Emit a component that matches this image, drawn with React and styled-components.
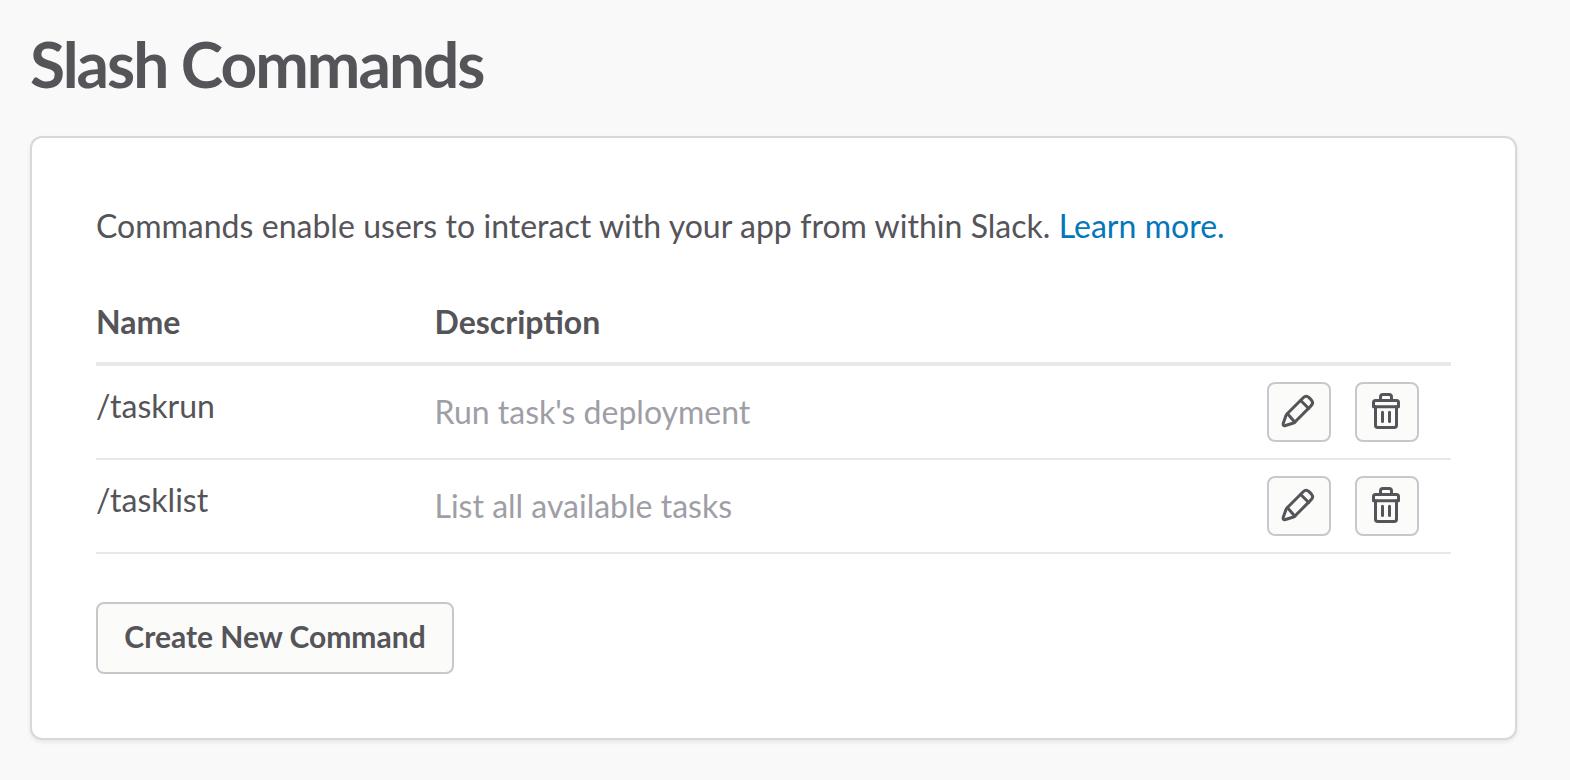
import React from "react";
import styled, { createGlobalStyle } from "styled-components";

const Global = createGlobalStyle`
  * { box-sizing: border-box; }
  body {
    margin: 0;
    background: #f9f9f9;
    color: #555459;
    font-family: Lato, "Liberation Sans", sans-serif;
    font-size: 32px;
    overflow: hidden;
  }
`;

const Page = styled.main`
  width: 1570px;
  height: 780px;
  padding: 30px 53px 0 30px;
  background: #f9f9f9;
`;

const Title = styled.h1`
  margin: 0 0 26px;
  height: 80px;
  line-height: 68px;
  font-size: 64px;
  font-weight: 700;
  letter-spacing: -2px;
`;

const Card = styled.section`
  height: 604px;
  padding: 64px;
  background: #fff;
  border: 2px solid #d8d8d8;
  border-radius: 12px;
  box-shadow: 0 2px 4px rgba(0, 0, 0, 0.08);
`;

const Intro = styled.p`
  margin: 0;
  height: 48px;
  line-height: 48px;
  white-space: nowrap;
  word-spacing: 0.2px;
`;

const Link = styled.a`
  color: #0576b9;
  text-decoration: none;
`;

const Table = styled.div`
  margin-top: 48px;
`;

const Row = styled.div`
  display: grid;
  grid-template-columns: 338.5px 1fr auto;
  height: 94px;
  padding-right: 32px;
  border-bottom: 2px solid #e8e8e8;
`;

const HeadRow = styled(Row)`
  height: 68px;
  border-bottom-width: 4px;
  font-weight: 700;
  line-height: 48px;
`;

const Name = styled.div`
  padding-top: 16px;
  line-height: 48px;
`;

const Description = styled.div`
  padding-top: 22px;
  line-height: 48px;
  color: #9e9ea6;
`;

const Actions = styled.div`
  display: flex;
  gap: 24px;
  padding-top: 16px;
`;

const Button = styled.button`
  display: flex;
  align-items: center;
  justify-content: center;
  padding: 0;
  background: #fbfbf9;
  border: 2px solid #c5c9cc;
  border-radius: 8px;
  color: #555459;
  font-family: inherit;
`;

const IconButton = styled(Button)`
  width: 64px;
  height: 60px;
`;

const CreateButton = styled(Button)`
  width: 358px;
  height: 72px;
  margin-top: 48px;
  padding-bottom: 5px;
  font-size: 30px;
  font-weight: 700;
`;

const Icon = styled.svg`
  display: block;
  width: 40px;
  height: 40px;
  fill: none;
  stroke: currentColor;
  stroke-width: 3;
  stroke-linejoin: round;
  stroke-linecap: round;
`;

const Pencil = () => (
  <Icon viewBox="0 0 40 40">
    <path d="M8.200 21.700L24.200 5.700Q27 2.900 29.800 5.400L32.300 7.900Q35 10.800 32.200 13.600L16.200 29.800Q15.500 30.600 14.500 31L6.500 33.500Q3.700 34.300 4.200 31.500L7 23.500Q7.400 22.500 8.200 21.700Z" />
    <path d="M21.700 8.500L29.700 16.500M8.500 21.700L15.900 30.200" />
  </Icon>
);

const Trash = () => (
  <Icon viewBox="0 0 40 40">
    <path d="M6.500 14.700V10.500Q6.500 8.500 8.500 8.500H29.500Q31.500 8.500 31.500 10.500V14.700Z" />
    <path d="M13.500 8.500V5Q13.500 2.500 16 2.500H22Q24.500 2.500 24.500 5V8.500" />
    <path d="M8.500 14.700V33.200Q8.500 35.500 10.800 35.500H27.200Q29.500 35.500 29.500 33.200V14.700M15.500 20.300V29.500M22.500 20.300V29.500" />
  </Icon>
);

const commands = [
  { name: "/taskrun", description: "Run task's deployment" },
  { name: "/tasklist", description: "List all available tasks" },
];

export default function App() {
  return (
    <Page>
      <Global />
      <Title>Slash Commands</Title>
      <Card>
        <Intro>
          Commands enable users to interact with your app from within Slack.{" "}
          <Link href="#">Learn more.</Link>
        </Intro>
        <Table>
          <HeadRow>
            <div>Name</div>
            <div>Description</div>
          </HeadRow>
          {commands.map((c) => (
            <Row key={c.name}>
              <Name>{c.name}</Name>
              <Description>{c.description}</Description>
              <Actions>
                <IconButton aria-label="Edit"><Pencil /></IconButton>
                <IconButton aria-label="Delete"><Trash /></IconButton>
              </Actions>
            </Row>
          ))}
        </Table>
        <CreateButton>Create New Command</CreateButton>
      </Card>
    </Page>
  );
}
